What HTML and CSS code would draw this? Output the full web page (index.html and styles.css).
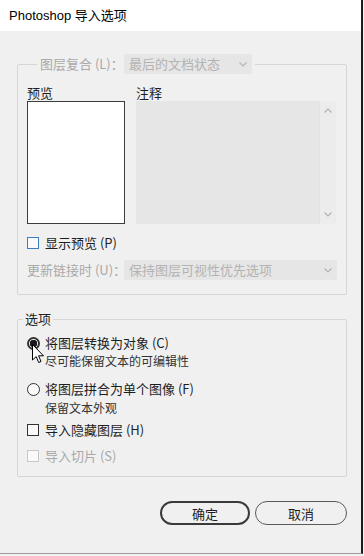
FILE: index.html
```html
<!DOCTYPE html>
<html lang="zh-CN">
<head>
    <meta charset="UTF-8">
    <meta name="viewport" content="width=device-width, initial-scale=1.0">
    <link rel="stylesheet" href="styles.css">
    <title>Photoshop 导入选项</title>
</head>
<body>
    <div class="window">
        <div class="titlebar">Photoshop 导入选项</div>

        <div class="content">
            <!-- Grupo de composição de camadas -->
            <fieldset class="group group-comp">
                <legend class="comp-legend">
                    <span class="disabled-text comp-label">图层复合 (L)：</span>
                    <span class="select select-comp">
                        <span>最后的文档状态</span>
                        <svg class="chevron" width="8" height="5" viewBox="0 0 8 5"><path d="M0.5 0.5 L4 4 L7.5 0.5" fill="none" stroke="#b4b4b4" stroke-width="1.2"/></svg>
                    </span>
                </legend>

                <div class="preview-grid">
                    <span class="col-label">预览</span>
                    <span class="col-label">注释</span>
                    <div class="preview-box"></div>
                    <div class="notes-box">
                        <div class="notes-scroll">
                            <svg width="8" height="5" viewBox="0 0 8 5"><path d="M0.5 4.5 L4 1 L7.5 4.5" fill="none" stroke="#b4b4b4" stroke-width="1.2"/></svg>
                            <svg width="8" height="5" viewBox="0 0 8 5"><path d="M0.5 0.5 L4 4 L7.5 0.5" fill="none" stroke="#b4b4b4" stroke-width="1.2"/></svg>
                        </div>
                    </div>
                </div>

                <div class="check-row preview-check">
                    <span class="checkbox checkbox-focus"></span>
                    <span>显示预览 (P)</span>
                </div>

                <div class="update-row">
                    <span class="disabled-text update-label">更新链接时 (U)：</span>
                    <span class="select select-update">
                        <span>保持图层可视性优先选项</span>
                        <svg class="chevron" width="8" height="5" viewBox="0 0 8 5"><path d="M0.5 0.5 L4 4 L7.5 0.5" fill="none" stroke="#b4b4b4" stroke-width="1.2"/></svg>
                    </span>
                </div>
            </fieldset>

            <!-- Opções -->
            <fieldset class="group group-options">
                <legend class="options-legend">选项</legend>

                <div class="radio-row row-convert">
                    <span class="radio radio-on"></span>
                    <span>将图层转换为对象 (C)</span>
                </div>
                <div class="sub sub-convert">尽可能保留文本的可编辑性</div>

                <div class="radio-row row-flatten">
                    <span class="radio"></span>
                    <span>将图层拼合为单个图像 (F)</span>
                </div>
                <div class="sub sub-flatten">保留文本外观</div>

                <div class="check-row row-hidden">
                    <span class="checkbox"></span>
                    <span>导入隐藏图层 (H)</span>
                </div>

                <div class="check-row row-slices disabled-text">
                    <span class="checkbox checkbox-disabled"></span>
                    <span>导入切片 (S)</span>
                </div>
            </fieldset>

            <div class="buttons">
                <button class="btn btn-ok">确定</button>
                <button class="btn btn-cancel">取消</button>
            </div>
        </div>

        <!-- ponteiro do mouse sobre a primeira opção -->
        <svg class="cursor" width="13" height="20" viewBox="0 0 13 20">
            <path d="M0.5 0.5 L0.5 16 L4.2 12.6 L6.7 18.5 L9 17.5 L6.6 11.8 L11.5 11.8 Z" fill="#fff" stroke="#000" stroke-width="1" stroke-linejoin="round"/>
        </svg>
    </div>
</body>
</html>
```

FILE: styles.css
```css
body {
    margin: 0;
    background: #f0f0f0;
    font-family: "Noto Sans CJK SC", sans-serif;
    font-size: 13px;
    line-height: 16px;
    color: #1e1e1e;
}

.window {
    position: relative;
    width: 361px;
    height: 553px;
    background: #f0f0f0;
    border-right: 2px solid #1c1c1c;
    border-bottom: 1px solid #9c9c9c;
}

.titlebar {
    height: 31px;
    line-height: 31px;
    padding-left: 9px;
    background: #fff;
    color: #000;
    font-family: "Liberation Sans", "Noto Sans CJK SC", sans-serif;
    font-size: 13px;
}

.content {
    padding: 23px 0 0 17px;
}

/* Caixas de grupo */
.group {
    margin: 0;
    width: 330px;
    box-sizing: border-box;
    border: 1px solid #d6d6d6;
    border-radius: 2px;
    padding: 0 9px;
    min-inline-size: 0;
}

.group-comp {
    padding-bottom: 14px;
}

.comp-legend {
    display: flex;
    align-items: center;
    margin-left: 10px;
    padding: 0 3px;
}

.comp-label {
    width: 84px;
    white-space: nowrap;
}

.disabled-text {
    color: #a9a9a9;
}

.select {
    display: flex;
    align-items: center;
    justify-content: space-between;
    height: 20px;
    box-sizing: border-box;
    padding: 0 5px 0 5px;
    background: #e6e6e6;
    color: #b3b3b3;
    white-space: nowrap;
}

.select-comp {
    width: 128px;
}

.select-update {
    width: 213px;
}

.chevron {
    flex: none;
}

.preview-grid {
    display: grid;
    grid-template-columns: 98px 200px;
    column-gap: 11px;
    margin-top: 10px;
}

.col-label {
    line-height: 17px;
}

.preview-box {
    height: 123px;
    box-sizing: border-box;
    border: 1px solid #3c3c3c;
    background: #fff;
}

.notes-box {
    height: 123px;
    display: flex;
    justify-content: flex-end;
    background: #e6e6e6;
}

.notes-scroll {
    width: 17px;
    display: flex;
    flex-direction: column;
    justify-content: space-between;
    align-items: center;
    padding: 7px 0 7px;
    box-sizing: border-box;
    background: #ececec;
    border-left: 1px solid #e2e2e2;
}

/* Linhas de caixa de seleção e rádio */
.check-row {
    display: flex;
    align-items: center;
    gap: 6px;
    height: 16px;
}

.radio-row {
    display: flex;
    align-items: center;
    gap: 5px;
    height: 16px;
}

.checkbox {
    width: 12px;
    height: 12px;
    box-sizing: border-box;
    border: 1px solid #333;
    background: #f9f9f9;
    flex: none;
}

.checkbox-focus {
    border-color: #3a7ec1;
}

.checkbox-disabled {
    border-color: #c8c8c8;
}

.radio {
    width: 13px;
    height: 13px;
    box-sizing: border-box;
    border: 1px solid #333;
    border-radius: 50%;
    background: #f9f9f9;
    flex: none;
}

.radio-on {
    border-width: 2px;
    background: radial-gradient(circle, #1a1a1a 0 3.5px, #f9f9f9 4px);
}

.preview-check {
    margin-top: 11px;
}

.update-row {
    display: flex;
    align-items: center;
    margin-top: 9px;
}

.update-label {
    width: 97px;
    white-space: nowrap;
}

.group-options {
    margin-top: 16px;
    padding-bottom: 12px;
}

.options-legend {
    margin-left: -4px;
    padding: 0 2px;
}

.sub {
    padding-left: 18px;
    font-size: 12px;
    line-height: 15px;
    color: #333;
}

.row-convert {
    margin-top: 8px;
}

.sub-convert {
    margin-top: 2px;
}

.row-flatten {
    margin-top: 13px;
}

.sub-flatten {
    margin-top: 3px;
}

.row-hidden {
    margin-top: 7px;
}

.row-slices {
    margin-top: 10px;
}

/* Botões */
.buttons {
    display: flex;
    justify-content: flex-end;
    gap: 5px;
    width: 330px;
    margin-top: 24px;
}

.btn {
    height: 24px;
    box-sizing: border-box;
    border-radius: 12px;
    background: #f0f0f0;
    color: #1e1e1e;
    font-family: "Noto Sans CJK SC", sans-serif;
    font-size: 13px;
    padding: 0;
}

.btn-ok {
    width: 90px;
    border: 2px solid #3a3a3a;
}

.btn-cancel {
    width: 92px;
    border: 1px solid #5a5a5a;
}

.cursor {
    position: absolute;
    left: 32px;
    top: 344px;
}
```
